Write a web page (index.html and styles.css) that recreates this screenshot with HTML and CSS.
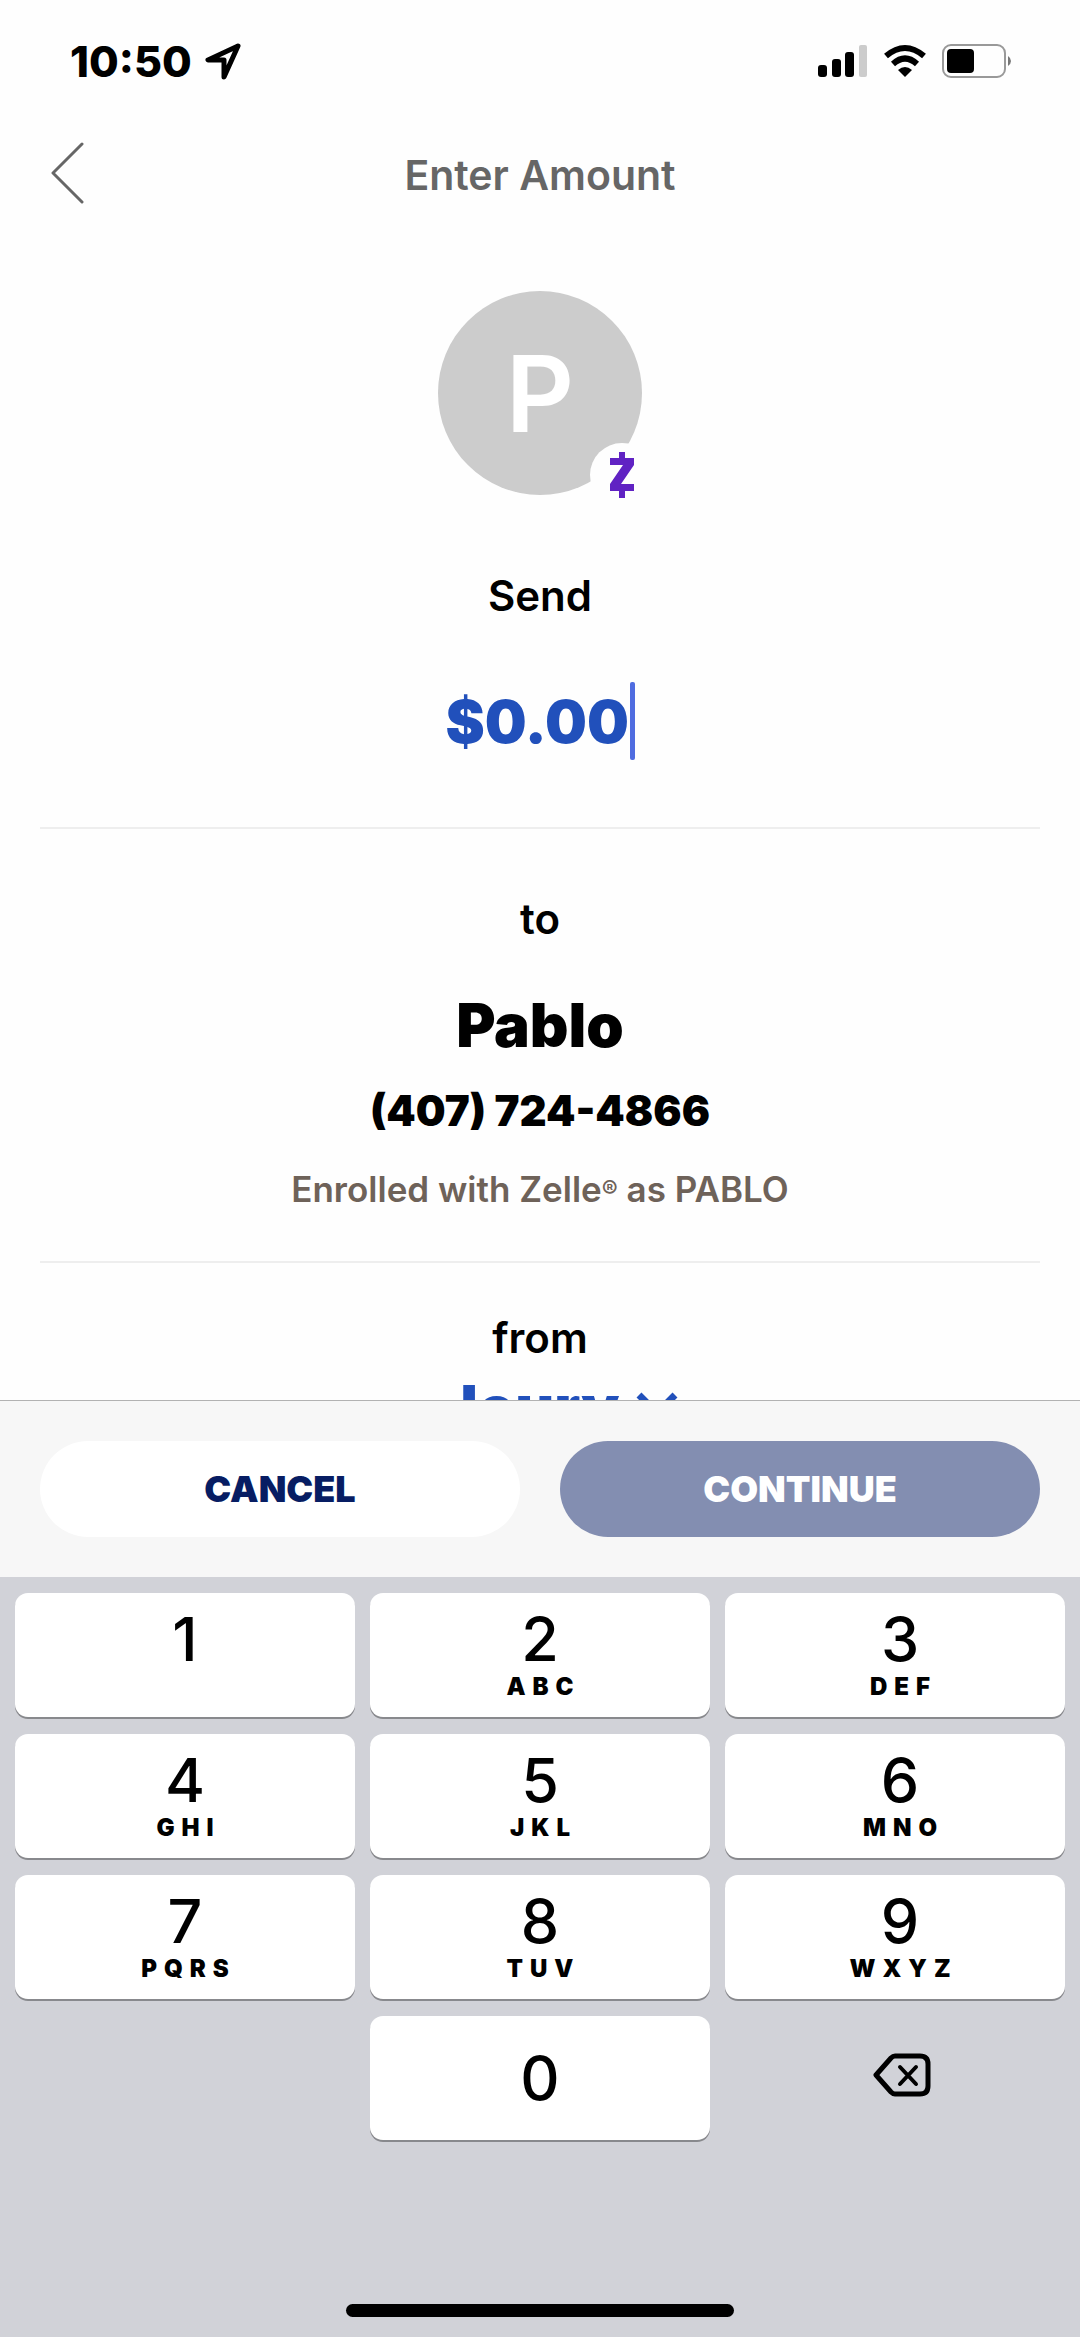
FILE: index.html
```html
<!DOCTYPE html>
<html lang="en">
<head>
    <meta charset="UTF-8">
    <meta name="viewport" content="width=device-width, initial-scale=1.0">
    <title>Enter Amount</title>
    <link rel="stylesheet" href="styles.css">
</head>
<body>
    <!-- Status bar -->
    <div class="status-bar">
        <div class="status-left">
            <span class="time">10:50</span>
            <svg class="location" width="38" height="38" viewBox="0 0 38 38" fill="none" stroke="#000" stroke-width="5" stroke-linejoin="round">
                <path d="M34 4 L4 18 L20 18 L20 35 Z"/>
            </svg>
        </div>
        <div class="status-right">
            <svg width="50" height="34" viewBox="0 0 50 34">
                <rect x="0" y="21" width="9" height="12" rx="3"/>
                <rect x="14" y="15" width="9" height="18" rx="3"/>
                <rect x="27" y="8" width="9" height="25" rx="3"/>
                <rect x="41" y="1" width="8" height="32" rx="2" fill="#ccc"/>
            </svg>
            <svg width="44" height="34" viewBox="0 0 44 34">
                <path d="M3 12 Q22 -4 41 12" fill="none" stroke="#000" stroke-width="6"/>
                <path d="M10 20 Q22 9 34 20" fill="none" stroke="#000" stroke-width="6"/>
                <path d="M15 26 Q22 20 29 26 L22 33 Z"/>
            </svg>
            <svg width="70" height="34" viewBox="0 0 70 34">
                <rect x="1" y="1" width="62" height="32" rx="8" fill="none" stroke="#999" stroke-width="2"/>
                <rect x="5" y="5" width="27" height="24" rx="4"/>
                <path d="M66 12 Q69 14 69 17 Q69 20 66 22 Z" fill="#777"/>
            </svg>
        </div>
    </div>

    <!-- Header -->
    <header>
        <button class="back" aria-label="Back">
            <svg width="34" height="62" viewBox="0 0 34 62" fill="none" stroke="#666" stroke-width="3" stroke-linecap="round" stroke-linejoin="round">
                <path d="M31 2 L2 31 L31 60"/>
            </svg>
        </button>
        <h1>Enter Amount</h1>
    </header>

    <!-- Payment -->
    <main>
        <div class="avatar">
            P
            <span class="badge">
                <svg width="26" height="46" viewBox="0 0 26 46" fill="#6022c3">
                    <path d="M10 0 H16 V6 H25 V13 L12 32 H25 V39 H16 V46 H10 V39 H1 V32 L14 13 H1 V6 H10 Z"/>
                </svg>
            </span>
        </div>
        <section class="send">
            <label class="label" for="amount">Send</label>
            <div class="amount">
                <input type="text" id="amount" value="$0.00" inputmode="decimal">
            </div>
        </section>
        <section class="recipient">
            <p class="label">to</p>
            <h2>Pablo</h2>
            <p class="phone">(407) 724-4866</p>
            <p class="enrolled">Enrolled with Zelle<span class="reg">®</span> as PABLO</p>
        </section>
        <section class="source">
            <label class="label" for="account">from</label>
            <div class="account">
                <select id="account">
                    <option>Joury</option>
                </select>
                <svg width="42" height="30" viewBox="0 0 42 30" fill="none" stroke="#2150bb" stroke-width="7">
                    <path d="M3 3 L21 21 L39 3"/>
                </svg>
            </div>
        </section>
    </main>

    <!-- Actions -->
    <div class="actions">
        <button class="cancel">CANCEL</button>
        <button class="continue">CONTINUE</button>
    </div>

    <!-- Keypad -->
    <div class="keyboard">
        <div class="keypad">
            <button class="key">1</button>
            <button class="key">2<span class="letters">ABC</span></button>
            <button class="key">3<span class="letters">DEF</span></button>
            <button class="key">4<span class="letters">GHI</span></button>
            <button class="key">5<span class="letters">JKL</span></button>
            <button class="key">6<span class="letters">MNO</span></button>
            <button class="key">7<span class="letters">PQRS</span></button>
            <button class="key">8<span class="letters">TUV</span></button>
            <button class="key">9<span class="letters">WXYZ</span></button>
            <span></span>
            <button class="key zero">0</button>
            <button class="delete" aria-label="Delete">
                <svg width="58" height="44" viewBox="0 0 58 44" fill="none" stroke="#000" stroke-width="5" stroke-linecap="round" stroke-linejoin="round">
                    <path d="M22 3 H47 Q55 3 55 11 V33 Q55 41 47 41 H22 Q20 41 18 39 L3 22 L18 5 Q20 3 22 3 Z"/>
                    <path d="M27 14 L43 31 M43 14 L27 31" stroke-width="4"/>
                </svg>
            </button>
        </div>
        <div class="home-bar"></div>
    </div>
</body>
</html>
```

FILE: styles.css
```css
* {
    margin: 0;
    padding: 0;
    box-sizing: border-box;
}

body {
    display: flex;
    flex-direction: column;
    height: 100vh;
    overflow: hidden;
    font-family: 'Inter', sans-serif;
    background: #fefefe;
    color: #000;
}

button, input, select {
    font-family: inherit;
    border: none;
    background: none;
}

svg {
    display: block;
}

/* Status bar */
.status-bar {
    display: flex;
    justify-content: space-between;
    align-items: center;
    padding: 36px 68px 36px 70px;
}

.status-left {
    display: flex;
    align-items: center;
    gap: 12px;
}

.time {
    font-size: 43px;
    font-weight: 800;
    line-height: 50px;
}

.status-right {
    display: flex;
    align-items: center;
    gap: 15px;
}

/* Header */
header {
    display: grid;
    grid-template-columns: 1fr auto 1fr;
    align-items: center;
    height: 106px;
    padding: 0 51px;
}

.back {
    justify-self: start;
    padding-bottom: 4px;
}

h1 {
    font-size: 41px;
    font-weight: 600;
    line-height: 50px;
    color: #666;
}

/* Payment */
main {
    flex: 1;
    min-height: 0;
    overflow: hidden;
    padding: 63px 40px 0;
    text-align: center;
}

.avatar {
    position: relative;
    width: 204px;
    height: 204px;
    margin: 0 auto;
    border-radius: 50%;
    background: #ccc;
    color: #fff;
    font-size: 106px;
    font-weight: 600;
    line-height: 206px;
}

.badge {
    position: absolute;
    right: -12px;
    bottom: -12px;
    display: flex;
    justify-content: center;
    align-items: center;
    width: 64px;
    height: 64px;
    border-radius: 50%;
    background: #fefefe;
}

.label {
    display: block;
    font-size: 42px;
    font-weight: 600;
    line-height: 50px;
}

.send {
    padding: 76px 0 67px;
    border-bottom: 2px solid #eee;
}

.amount {
    display: flex;
    justify-content: center;
    align-items: center;
    margin-top: 61px;
}

.amount input {
    width: 184px;
    height: 78px;
    font-size: 59px;
    font-weight: 900;
    color: #2150bb;
}

/* Text cursor */
.amount::after {
    content: '';
    width: 5px;
    height: 78px;
    border-radius: 2px;
    background: #4f6ce0;
}

.recipient {
    padding: 65px 0 50px;
    border-bottom: 2px solid #eee;
}

h2 {
    margin-top: 46px;
    font-size: 60px;
    font-weight: 900;
    line-height: 70px;
}

.phone {
    margin-top: 26px;
    font-size: 42px;
    font-weight: 900;
    line-height: 50px;
}

.enrolled {
    margin-top: 31px;
    font-size: 35px;
    font-weight: 600;
    line-height: 44px;
    color: #6e6259;
}

.reg {
    font-size: 24px;
    line-height: 24px;
    vertical-align: 4px;
}

.source {
    padding-top: 50px;
}

.account {
    display: flex;
    justify-content: center;
    align-items: center;
    gap: 16px;
    margin-top: 9px;
    padding-left: 40px;
}

.account select {
    appearance: none;
    height: 70px;
    font-size: 60px;
    font-weight: 900;
    line-height: 70px;
    color: #2150bb;
}

/* Actions */
.actions {
    display: grid;
    grid-template-columns: 1fr 1fr;
    gap: 40px;
    padding: 40px;
    border-top: 1px solid #b2b2b2;
    background: #f7f7f7;
}

.actions button {
    height: 96px;
    border-radius: 48px;
    font-size: 36px;
    font-weight: 900;
}

.cancel {
    background: #fff;
    color: #071d63;
}

.actions .continue {
    background: #838eb1;
    color: #fff;
}

/* Keypad */
.keyboard {
    padding: 16px 15px 20px;
    background: #d1d2d8;
}

.keypad {
    display: grid;
    grid-template-columns: repeat(3, 1fr);
    gap: 17px 15px;
}

.key {
    display: flex;
    flex-direction: column;
    align-items: center;
    height: 124px;
    padding-top: 16px;
    border-radius: 13px;
    background: #fff;
    box-shadow: 0 2px 0 #88898d;
    font-size: 61px;
    font-weight: 500;
    line-height: 60px;
    color: #000;
}

.key:nth-child(3n) {
    padding-left: 10px;
}

.letters {
    padding-left: 7px;
    font-size: 24px;
    font-weight: 900;
    line-height: 36px;
    letter-spacing: 7px;
}

.zero {
    justify-content: center;
    padding-top: 0;
}

.delete {
    display: flex;
    justify-content: center;
    align-items: center;
    padding: 0 0 6px 14px;
}

.home-bar {
    width: 37%;
    height: 13px;
    margin: 164px auto 0;
    border-radius: 7px;
    background: #000;
}
```
